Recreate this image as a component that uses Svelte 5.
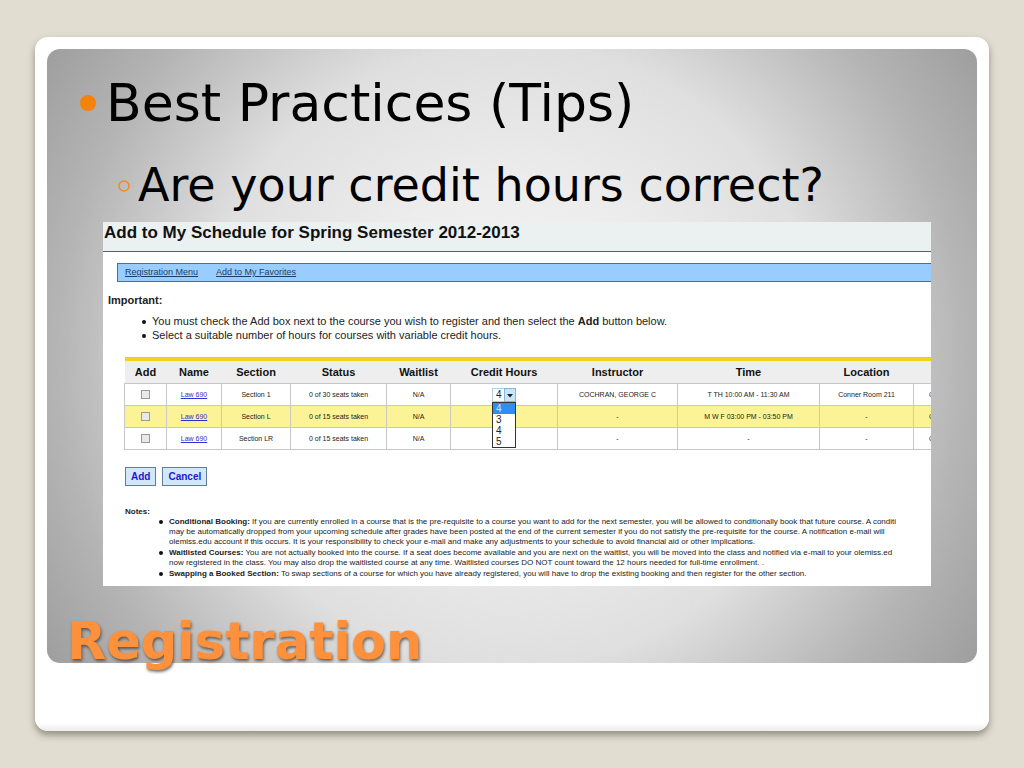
<script>
  let hours = '4';
  const hourOptions = ['4', '3', '4', '5'];

  let courses = [
    {
      id: 1,
      name: 'Law 690',
      section: 'Section 1',
      status: '0 of 30 seats taken',
      waitlist: 'N/A',
      instructor: 'COCHRAN, GEORGE C',
      time: 'T TH 10:00 AM - 11:30 AM',
      location: 'Conner Room 211',
      added: false
    },
    {
      id: 2,
      name: 'Law 690',
      section: 'Section L',
      status: '0 of 15 seats taken',
      waitlist: 'N/A',
      instructor: '-',
      time: 'M W F 03:00 PM - 03:50 PM',
      location: '-',
      added: false
    },
    {
      id: 3,
      name: 'Law 690',
      section: 'Section LR',
      status: '0 of 15 seats taken',
      waitlist: 'N/A',
      instructor: '-',
      time: '-',
      location: '-',
      added: false
    }
  ];

  const notes = [
    {
      title: 'Conditional Booking:',
      lines: [
        'If you are currently enrolled in a course that is the pre-requisite to a course you want to add for the next semester, you will be allowed to conditionally book that future course. A conditi',
        'may be automatically dropped from your upcoming schedule after grades have been posted at the end of the current semester if you do not satisfy the pre-requisite for the course. A notification e-mail will',
        'olemiss.edu account if this occurs. It is your responsibility to check your e-mail and make any adjustments to your schedule to avoid financial aid or other implications.'
      ]
    },
    {
      title: 'Waitlisted Courses:',
      lines: [
        'You are not actually booked into the course. If a seat does become available and you are next on the waitlist, you will be moved into the class and notified via e-mail to your olemiss.ed',
        'now registered in the class. You may also drop the waitlisted course at any time. Waitlisted courses DO NOT count toward the 12 hours needed for full-time enrollment. .'
      ]
    },
    {
      title: 'Swapping a Booked Section:',
      lines: [
        'To swap sections of a course for which you have already registered, you will have to drop the existing booking and then register for the other section.'
      ]
    }
  ];
</script>

<main class="slide">
  <div class="panel">
    <ul class="points">
      <li>
        <svg class="dot" viewBox="0 0 16 16" aria-hidden="true"><circle cx="8" cy="8" r="8" fill="#f5820c" /></svg>
        <span>Best Practices (Tips)</span>
      </li>
      <li class="sub">
        <svg class="ring" viewBox="0 0 12 12" aria-hidden="true"><circle cx="6" cy="6" r="5" fill="none" stroke="#f08a24" stroke-width="1.5" /></svg>
        <span>Are your credit hours correct?</span>
      </li>
    </ul>

    <section class="schedule">
      <h2>Add to My Schedule for Spring Semester 2012-2013</h2>
      <nav>
        <a href="#menu">Registration Menu</a>
        <a href="#favorites">Add to My Favorites</a>
      </nav>

      <h3>Important:</h3>
      <ul class="tips">
        <li>You must check the Add box next to the course you wish to register and then select the <b>Add</b> button below.</li>
        <li>Select a suitable number of hours for courses with variable credit hours.</li>
      </ul>

      <table>
        <colgroup>
          <col class="c-add" />
          <col class="c-name" />
          <col class="c-section" />
          <col class="c-status" />
          <col class="c-wait" />
          <col class="c-hours" />
          <col class="c-instructor" />
          <col class="c-time" />
          <col class="c-location" />
          <col class="c-last" />
        </colgroup>
        <thead>
          <tr>
            <th>Add</th>
            <th>Name</th>
            <th>Section</th>
            <th>Status</th>
            <th>Waitlist</th>
            <th>Credit Hours</th>
            <th>Instructor</th>
            <th>Time</th>
            <th>Location</th>
            <th></th>
          </tr>
        </thead>
        <tbody>
          {#each courses as course (course.id)}
            <tr>
              <td><input type="checkbox" bind:checked={course.added} aria-label="Add {course.section}" /></td>
              <td><a href="#course">{course.name}</a></td>
              <td>{course.section}</td>
              <td>{course.status}</td>
              <td>{course.waitlist}</td>
              <td>
                {#if course.id === 1}
                  <div class="picker">
                    <select bind:value={hours} aria-label="Credit Hours">
                      <option>4</option>
                      <option>3</option>
                      <option>5</option>
                    </select>
                    <svg class="arrow" viewBox="0 0 12 14" aria-hidden="true">
                      <rect x="0.5" y="0.5" width="11" height="13" fill="#c9e6f8" stroke="#8fb4cc" />
                      <path d="M3 6h6L6 9.500z" fill="#123" />
                    </svg>
                    <ul class="options">
                      {#each hourOptions as option, i}
                        <li class:active={i === 0}>{option}</li>
                      {/each}
                    </ul>
                  </div>
                {/if}
              </td>
              <td>{course.instructor}</td>
              <td>{course.time}</td>
              <td>{course.location}</td>
              <td class="last">C</td>
            </tr>
          {/each}
        </tbody>
      </table>

      <div class="actions">
        <button type="button">Add</button>
        <button type="button">Cancel</button>
      </div>

      <h4>Notes:</h4>
      <ul class="notes">
        {#each notes as note}
          <li>
            <b>{note.title}</b>
            {#each note.lines as line, i}
              {#if i > 0}<br />{/if}{line}
            {/each}
          </li>
        {/each}
      </ul>
    </section>

    <h1>Registration</h1>
  </div>
</main>

<style>
  :global(body) {
    background: #e1ddd1;
  }

  ul, h1, h2, h3, h4 {
    margin: 0;
    padding: 0;
    list-style: none;
  }

  .slide {
    margin: 37px 35px;
    padding: 12px 12px 68px;
    border-radius: 13px;
    background: linear-gradient(to top, #ececec, #fff 8px);
    box-shadow: 0 4px 7px rgba(90, 92, 75, 0.6);
    font-family: Verdana, "DejaVu Sans", sans-serif;
  }

  .panel {
    padding: 18px 46px 0 56px;
    border-radius: 13px;
    background: radial-gradient(circle farthest-corner, #f6f6f6, #ededed 30%, #dfdfdf 56%, #b4b4b4 82%, #9e9e9e);
  }

  .points li {
    display: flex;
    align-items: center;
    gap: 10px;
    margin-left: -23px;
    font-size: 52px;
    line-height: 72px;
    white-space: nowrap;
  }

  .points .sub {
    gap: 8px;
    margin: 10px 0 0 15px;
    font-size: 46px;
    line-height: 73px;
  }

  .dot {
    width: 16px;
  }

  .ring {
    width: 12px;
  }

  .schedule {
    overflow: hidden;
    padding-bottom: 7px;
    background: #fff;
    color: #222;
    font-family: "Liberation Sans", Arial, sans-serif;
    white-space: nowrap;
  }

  h2 {
    height: 29px;
    padding-left: 1px;
    border-bottom: 1px solid #55636a;
    background: #ebf0f1;
    color: #111;
    font-size: 17px;
    line-height: 21px;
  }

  nav {
    display: flex;
    gap: 18px;
    margin: 11px 0 0 14px;
    padding-left: 7px;
    border: 1px solid #4f6f8c;
    border-right: 0;
    background: #99ccff;
    font-size: 9px;
    line-height: 17px;
  }

  nav a {
    color: #1c3f66;
  }

  h3 {
    margin: 11px 0 0 5px;
    font-size: 11px;
    line-height: 14px;
  }

  .tips {
    margin: 7px 0 0 49px;
    font-size: 11px;
    line-height: 14px;
  }

  .tips li::before, .notes li::before {
    content: '';
    display: inline-block;
    width: 4px;
    height: 4px;
    margin: 0 6px 0 -10px;
    border-radius: 50%;
    background: #111;
    vertical-align: middle;
  }

  table {
    width: 845px;
    margin: 15px 0 0 21px;
    border-collapse: collapse;
    border-top: 4px solid #ecd51e;
    table-layout: fixed;
    font-size: 7px;
    text-align: center;
  }

  .c-add { width: 42px; }
  .c-name { width: 55px; }
  .c-section { width: 69px; }
  .c-status { width: 96px; }
  .c-wait { width: 64px; }
  .c-hours { width: 107px; }
  .c-instructor { width: 120px; }
  .c-time { width: 142px; }
  .c-location { width: 94px; }
  .c-last { width: 56px; }

  th {
    height: 22px;
    padding: 0;
    background: #eee;
    color: #111;
    font-size: 11px;
  }

  td {
    height: 21px;
    padding: 0;
    border: 1px solid #c8c8c8;
    line-height: 12px;
  }

  tbody tr:nth-child(2) {
    background: #fbf396;
  }

  td a {
    color: #3030d0;
  }

  .last {
    padding-left: 15px;
    text-align: left;
  }

  td input {
    display: block;
    width: 9px;
    height: 9px;
    margin: 0 auto;
    border: 1px solid #999;
    background: #e9e9e9;
    appearance: none;
  }

  td input:checked {
    background: #1e90ff;
  }

  .picker {
    position: relative;
    width: 24px;
    height: 14px;
    margin: 0 auto;
  }

  .picker select {
    display: block;
    width: 24px;
    height: 14px;
    padding: 0 0 0 3px;
    border: 1px solid #bcd;
    background: #fff;
    color: #222;
    font: 10px/12px "Liberation Sans", Arial, sans-serif;
    appearance: none;
  }

  .arrow {
    position: absolute;
    top: 0;
    right: 0;
    width: 12px;
    height: 14px;
    pointer-events: none;
  }

  .options {
    position: absolute;
    top: 14px;
    left: 0;
    z-index: 1;
    box-sizing: border-box;
    width: 24px;
    border: 1px solid #333;
    background: #fff;
    font-size: 10px;
    line-height: 11px;
    text-align: left;
  }

  .options li {
    padding-left: 3px;
  }

  .options .active {
    background: #2f8ff0;
    color: #cfe6ff;
  }

  .actions {
    display: flex;
    gap: 6px;
    margin: 17px 0 0 22px;
  }

  button {
    padding: 0 5px;
    border: 1px solid #5f7f95;
    background: #d3e7fb;
    color: #1a1acc;
    font: bold 10px/17px "Liberation Sans", Arial, sans-serif;
  }

  h4 {
    margin: 20px 0 0 22px;
    font-size: 8px;
    line-height: 11px;
  }

  .notes {
    margin-left: 66px;
    font-size: 8px;
    line-height: 10px;
  }

  .notes li + li {
    margin-top: 1px;
  }

  h1 {
    margin: 35px 0 0 -36px;
    color: #ff903c;
    font-size: 51px;
    line-height: 42px;
    text-shadow: 1px 2px 3px rgba(60, 50, 40, 0.7);
  }
</style>
